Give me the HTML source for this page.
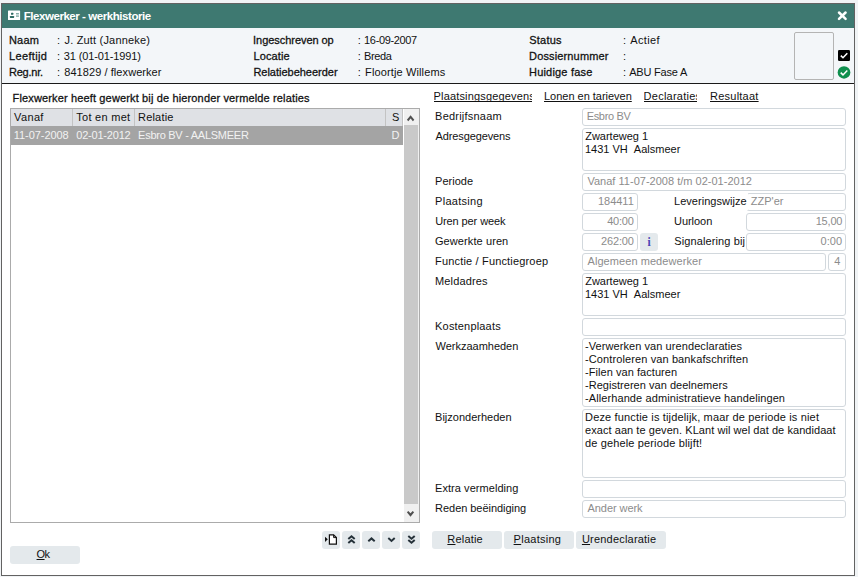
<!DOCTYPE html>
<html><head><meta charset="utf-8"><title>Flexwerker - werkhistorie</title>
<style>
html,body{margin:0;padding:0}
body{width:858px;height:577px;background:#f0f3f5;position:relative;overflow:hidden;font-family:"Liberation Sans",sans-serif;font-size:11px;color:#111}
.a{position:absolute}
.win{left:1px;top:3px;width:852px;height:571px;border:1px solid #626262;background:#fff}
.tb{left:2px;top:4px;width:852px;height:24px;background:#3e7971}
.hd{left:2px;top:28px;width:852px;height:55px;background:#f3f6f9}
.hl{left:2px;top:83px;width:852px;height:1px;background:#1a1a1a}
.tx{position:absolute;white-space:nowrap;line-height:14px;height:14px;overflow:visible}
.m{-webkit-text-stroke:0.28px #111}
.ttl{color:#fff;font-weight:bold;font-size:11.5px}
.sel{color:#f2f2f2}
.dis{color:#8c8c8c}
.tab{text-decoration:underline;text-underline-offset:1px;text-decoration-skip-ink:none;text-decoration-thickness:1px;overflow:hidden;height:13px}
.inp{position:absolute;box-sizing:border-box;border:1px solid #d2d8dd;border-radius:3px;background:#fff}
.btn{position:absolute;background:#e4e9ec;border-radius:3px;height:18px}
u{text-decoration:underline;text-underline-offset:1px;text-decoration-skip-ink:none;text-decoration-thickness:1px}
</style></head>
<body>
<div class="a win"></div><div class="a tb"></div><div class="a hd"></div><div class="a hl"></div>
<svg class="a" style="left:8px;top:10px" width="13" height="11" viewBox="0 0 13 11"><rect x="0" y="0.5" width="12.1" height="9.5" rx="0.6" fill="#fff"/><rect x="3" y="2.7" width="2.300" height="2" rx="0.5" fill="#2f6b62"/><rect x="1.900" y="6" width="4.200" height="1.900" rx="0.4" fill="#2f6b62"/><rect x="8" y="3.100" width="2.900" height="3.600" fill="#cfdedb"/><rect x="8" y="3.100" width="2.900" height="1" fill="#7fa8a2"/><rect x="8" y="5.700" width="2.900" height="1" fill="#7fa8a2"/></svg>
<svg class="a" style="left:836px;top:10px" width="12" height="12" viewBox="0 0 12 12"><path d="M3 2.500L9.600 8.900M9.600 2.500L3 8.900" stroke="#fff" stroke-width="2.500" stroke-linecap="round"/></svg>
<div class="a" style="left:794px;top:32px;width:38px;height:46px;border:1px solid #b4b4b4;border-radius:2px;background:#f3f6f9"></div>
<svg class="a" style="left:838px;top:50px" width="12" height="11" viewBox="0 0 12 11"><rect width="12" height="11" rx="1.2" fill="#000"/><path d="M2.800 5.600L5 7.800L9.300 3.300" stroke="#fff" stroke-width="1.500" fill="none"/></svg>
<svg class="a" style="left:837px;top:66px" width="14" height="13" viewBox="0 0 14 13"><ellipse cx="7" cy="6.450" rx="6.350" ry="6.250" fill="#0e8f4e"/><path d="M3.700 6.600L6 8.900L10.300 4.500" stroke="#fff" stroke-width="1.500" fill="none"/></svg>
<div class="a" style="left:10px;top:108px;width:408px;height:413px;border:1px solid #ababab;background:#fff"></div>
<div class="a" style="left:11px;top:109px;width:392px;height:17px;background:#dfe1e5"></div>
<div class="a" style="left:72px;top:109px;width:1px;height:17px;background:#c3c3c3"></div>
<div class="a" style="left:134px;top:109px;width:1px;height:17px;background:#c3c3c3"></div>
<div class="a" style="left:385px;top:109px;width:1px;height:17px;background:#c3c3c3"></div>
<div class="a" style="left:402px;top:109px;width:1px;height:17px;background:#c3c3c3"></div>
<div class="a" style="left:11px;top:126px;width:392px;height:19px;background:#a4a4a4"></div>
<div class="a" style="left:404px;top:109px;width:15px;height:413px;background:#f0f0f0"></div>
<div class="a" style="left:404px;top:125px;width:14px;height:379px;background:#c9c9c9"></div>
<svg class="a" style="left:403px;top:109px" width="16" height="16" viewBox="0 0 16 16"><path d="M3.900 10.800L5.300 12.200L7.600 9.600L9.900 12.200L11.300 10.800L7.600 6.200Z" fill="#505050"/></svg>
<svg class="a" style="left:403px;top:505px" width="16" height="16" viewBox="0 0 16 16"><path d="M3.900 7.300L5.300 5.900L7.500 8.300L9.700 5.900L11.100 7.300L7.500 11.700Z" fill="#505050"/></svg>
<div class="inp" style="left:582px;top:108px;width:264px;height:18px"></div>
<div class="inp" style="left:582px;top:128px;width:264px;height:43px"></div>
<div class="inp" style="left:582px;top:173px;width:264px;height:18px"></div>
<div class="inp" style="left:582px;top:193px;width:56px;height:18px"></div>
<div class="inp" style="left:746px;top:193px;width:100px;height:18px"></div>
<div class="inp" style="left:582px;top:213px;width:56px;height:18px"></div>
<div class="inp" style="left:746px;top:213px;width:100px;height:18px"></div>
<div class="inp" style="left:582px;top:233px;width:56px;height:18px"></div>
<div class="inp" style="left:746px;top:233px;width:100px;height:18px"></div>
<div class="inp" style="left:582px;top:253px;width:244px;height:18px"></div>
<div class="inp" style="left:828px;top:253px;width:18px;height:18px"></div>
<div class="inp" style="left:582px;top:273px;width:264px;height:43px"></div>
<div class="inp" style="left:582px;top:318px;width:264px;height:18px"></div>
<div class="inp" style="left:582px;top:338px;width:264px;height:69px"></div>
<div class="inp" style="left:582px;top:409px;width:264px;height:69px"></div>
<div class="inp" style="left:582px;top:480px;width:264px;height:18px"></div>
<div class="inp" style="left:582px;top:500px;width:264px;height:18px"></div>
<div class="a" style="left:745px;top:193px;width:2.5px;height:17px;background:#fff"></div>
<div class="btn" style="left:640px;top:233px;width:18px;height:18px"><span style="position:absolute;left:0;right:0;text-align:center;line-height:14px;font-family:'Liberation Serif',serif;font-weight:bold;color:#4a42b4;font-size:11.5px;top:2px">i</span></div>
<div class="btn" style="left:10px;top:546px;width:70px"></div>
<div class="btn" style="left:432px;top:531px;width:70px"></div>
<div class="btn" style="left:504px;top:531px;width:70px"></div>
<div class="btn" style="left:576px;top:531px;width:90px"></div>
<div class="btn" style="left:322px;top:531px;width:18px"><svg width="18" height="18" viewBox="0 0 18 18" style="position:absolute;left:0;top:0"><path d="M3 5.700L5.800 8.300L3 10.900Z" fill="#111"/><path d="M7.400 3.800H11.600L14.400 6.600V13.200H7.400Z" fill="#fff" stroke="#111" stroke-width="1.200"/><path d="M11.600 3.800V6.600H14.400" fill="none" stroke="#111" stroke-width="1"/></svg></div>
<div class="btn" style="left:342px;top:531px;width:18px"><svg width="18" height="18" viewBox="0 0 18 18" style="position:absolute;left:0;top:0"><path d="M6.300 8.100L9.500 5.300L12.700 8.100M6.300 12.100L9.500 9.300L12.700 12.100" stroke="#26323a" stroke-width="2" fill="none"/></svg></div>
<div class="btn" style="left:362px;top:531px;width:18px"><svg width="18" height="18" viewBox="0 0 18 18" style="position:absolute;left:0;top:0"><path d="M6.300 10.200L9.500 7.400L12.700 10.200" stroke="#26323a" stroke-width="2" fill="none"/></svg></div>
<div class="btn" style="left:382px;top:531px;width:18px"><svg width="18" height="18" viewBox="0 0 18 18" style="position:absolute;left:0;top:0"><path d="M6.300 7.100L9.500 9.900L12.700 7.100" stroke="#26323a" stroke-width="2" fill="none"/></svg></div>
<div class="btn" style="left:402px;top:531px;width:18px"><svg width="18" height="18" viewBox="0 0 18 18" style="position:absolute;left:0;top:0"><path d="M6.300 4.900L9.500 7.700L12.700 4.900M6.300 8.900L9.500 11.700L12.700 8.900" stroke="#26323a" stroke-width="2" fill="none"/></svg></div>
<span class="tx ttl" style="left:23.68px;top:9.00px;letter-spacing:-0.441px;">Flexwerker - werkhistorie</span>
<span class="tx m" style="left:8.96px;top:33.00px;letter-spacing:0.220px;">Naam</span>
<span class="tx " style="left:57.00px;top:33.00px;letter-spacing:0.185px;"><span style="margin-right:1px">:</span> J. Zutt (Janneke)</span>
<span class="tx m" style="left:8.95px;top:49.00px;letter-spacing:0.369px;">Leeftijd</span>
<span class="tx " style="left:57.00px;top:49.00px;letter-spacing:-0.137px;"><span style="margin-right:1px">:</span> 31 (01-01-1991)</span>
<span class="tx m" style="left:8.95px;top:65.00px;letter-spacing:-0.209px;">Reg.nr.</span>
<span class="tx " style="left:57.00px;top:65.00px;letter-spacing:0.068px;"><span style="margin-right:1px">:</span> 841829 / flexwerker</span>
<span class="tx m" style="left:253.10px;top:33.00px;letter-spacing:-0.050px;">Ingeschreven op</span>
<span class="tx " style="left:357.66px;top:33.00px;letter-spacing:-0.347px;"><span style="margin-right:1px">:</span> 16-09-2007</span>
<span class="tx m" style="left:253.39px;top:49.00px;letter-spacing:0.147px;">Locatie</span>
<span class="tx " style="left:357.66px;top:49.00px;letter-spacing:-0.367px;"><span style="margin-right:1px">:</span> Breda</span>
<span class="tx m" style="left:253.39px;top:65.00px;letter-spacing:-0.011px;">Relatiebeheerder</span>
<span class="tx " style="left:357.66px;top:65.00px;letter-spacing:0.130px;"><span style="margin-right:1px">:</span> Floortje Willems</span>
<span class="tx m" style="left:529.21px;top:33.00px;letter-spacing:0.242px;">Status</span>
<span class="tx " style="left:623.00px;top:33.00px;letter-spacing:0.380px;"><span style="margin-right:1px">:</span> Actief</span>
<span class="tx m" style="left:529.05px;top:49.00px;letter-spacing:0.146px;">Dossiernummer</span>
<span class="tx " style="left:623.00px;top:49.00px;">:</span>
<span class="tx m" style="left:529.03px;top:65.00px;letter-spacing:0.190px;">Huidige fase</span>
<span class="tx " style="left:623.00px;top:65.00px;letter-spacing:-0.186px;"><span style="margin-right:1px">:</span> ABU Fase A</span>
<span class="tx m" style="left:12.56px;top:91.00px;letter-spacing:0.144px;">Flexwerker heeft gewerkt bij de hieronder vermelde relaties</span>
<span class="tx " style="left:14.05px;top:110.00px;letter-spacing:0.362px;">Vanaf</span>
<span class="tx " style="left:76.24px;top:110.00px;letter-spacing:0.280px;">Tot en met</span>
<span class="tx " style="left:138.08px;top:110.00px;letter-spacing:0.179px;">Relatie</span>
<span class="tx " style="left:392.09px;top:110.00px;">S</span>
<span class="tx sel" style="left:13.84px;top:128.00px;letter-spacing:-0.062px;">11-07-2008</span>
<span class="tx sel" style="left:76.29px;top:128.00px;letter-spacing:-0.211px;">02-01-2012</span>
<span class="tx sel" style="left:138.08px;top:128.00px;letter-spacing:-0.266px;">Esbro BV - AALSMEER</span>
<span class="tx sel" style="left:391.59px;top:128.00px;">D</span>
<span class="tx " style="left:435.08px;top:109.00px;letter-spacing:0.214px;">Bedrijfsnaam</span>
<span class="tx " style="left:435.56px;top:129.00px;letter-spacing:-0.125px;">Adresgegevens</span>
<span class="tx " style="left:435.08px;top:174.00px;">Periode</span>
<span class="tx " style="left:435.08px;top:194.00px;letter-spacing:0.273px;">Plaatsing</span>
<span class="tx " style="left:435.13px;top:214.00px;letter-spacing:-0.094px;">Uren per week</span>
<span class="tx " style="left:434.98px;top:234.00px;letter-spacing:0.092px;">Gewerkte uren</span>
<span class="tx " style="left:435.08px;top:254.00px;letter-spacing:0.167px;">Functie / Functiegroep</span>
<span class="tx " style="left:435.08px;top:274.00px;letter-spacing:0.122px;">Meldadres</span>
<span class="tx " style="left:435.08px;top:319.00px;letter-spacing:0.179px;">Kostenplaats</span>
<span class="tx " style="left:435.60px;top:339.00px;letter-spacing:-0.021px;">Werkzaamheden</span>
<span class="tx " style="left:435.08px;top:410.00px;">Bijzonderheden</span>
<span class="tx " style="left:435.08px;top:481.00px;letter-spacing:0.049px;">Extra vermelding</span>
<span class="tx " style="left:435.08px;top:501.00px;letter-spacing:-0.042px;">Reden beëindiging</span>
<span class="tx " style="left:674.01px;top:194.00px;letter-spacing:0.034px;">Leveringswijze</span>
<span class="tx " style="left:674.00px;top:214.00px;letter-spacing:-0.044px;">Uurloon</span>
<span class="tx " style="left:674.28px;top:234.00px;letter-spacing:0.112px;">Signalering bij</span>
<span class="tx dis" style="left:586.68px;top:109.00px;letter-spacing:-0.328px;">Esbro BV</span>
<span class="tx " style="left:585.20px;top:129.00px;letter-spacing:-0.005px;">Zwarteweg 1</span>
<span class="tx " style="left:584.88px;top:142.00px;letter-spacing:0.008px;">1431 VH  Aalsmeer</span>
<span class="tx dis" style="left:587.46px;top:174.00px;letter-spacing:0.012px;">Vanaf 11-07-2008 t/m 02-01-2012</span>
<span class="tx dis" style="left:597.92px;top:194.00px;letter-spacing:-0.006px;">184411</span>
<span class="tx dis" style="left:607.16px;top:214.00px;letter-spacing:-0.204px;">40:00</span>
<span class="tx dis" style="left:601.04px;top:234.00px;letter-spacing:-0.167px;">262:00</span>
<span class="tx dis" style="left:750.75px;top:194.00px;letter-spacing:0.016px;">ZZP'er</span>
<span class="tx dis" style="left:815.71px;top:214.00px;letter-spacing:-0.204px;">15,00</span>
<span class="tx dis" style="left:820.50px;top:234.00px;letter-spacing:0.090px;">0:00</span>
<span class="tx dis" style="left:587.53px;top:254.00px;letter-spacing:0.066px;">Algemeen medewerker</span>
<span class="tx dis" style="left:834.16px;top:254.00px;">4</span>
<span class="tx " style="left:585.20px;top:274.00px;letter-spacing:-0.005px;">Zwarteweg 1</span>
<span class="tx " style="left:584.88px;top:287.00px;letter-spacing:0.008px;">1431 VH  Aalsmeer</span>
<span class="tx " style="left:584.97px;top:339.00px;letter-spacing:0.078px;">-Verwerken van urendeclaraties</span>
<span class="tx " style="left:584.97px;top:352.00px;letter-spacing:0.113px;">-Controleren van bankafschriften</span>
<span class="tx " style="left:584.97px;top:365.00px;letter-spacing:0.059px;">-Filen van facturen</span>
<span class="tx " style="left:584.97px;top:378.00px;letter-spacing:0.032px;">-Registreren van deelnemers</span>
<span class="tx " style="left:584.97px;top:391.00px;letter-spacing:0.098px;">-Allerhande administratieve handelingen</span>
<span class="tx " style="left:585.08px;top:410.00px;letter-spacing:0.156px;">Deze functie is tijdelijk, maar de periode is niet</span>
<span class="tx " style="left:585.03px;top:423.00px;letter-spacing:0.059px;">exact aan te geven. KLant wil wel dat de kandidaat</span>
<span class="tx " style="left:584.95px;top:436.00px;letter-spacing:0.145px;">de gehele periode blijft!</span>
<span class="tx dis" style="left:587.53px;top:501.00px;letter-spacing:-0.069px;">Ander werk</span>
<span class="tx tab" style="left:433.60px;top:89.00px;letter-spacing:0.156px;width:98.4px;">Plaatsingsgegevens</span>
<span class="tx tab" style="left:544.01px;top:89.00px;letter-spacing:-0.017px;">Lonen en tarieven</span>
<span class="tx tab" style="left:643.59px;top:89.00px;letter-spacing:0.247px;width:53.4px;">Declaraties</span>
<span class="tx tab" style="left:710.02px;top:89.00px;letter-spacing:0.235px;">Resultaat</span>
<span class="tx " style="left:36.55px;top:547.00px;letter-spacing:-0.542px;"><u>O</u>k</span>
<span class="tx " style="left:447.36px;top:532.00px;letter-spacing:0.186px;"><u>R</u>elatie</span>
<span class="tx " style="left:513.60px;top:532.00px;letter-spacing:0.267px;"><u>P</u>laatsing</span>
<span class="tx " style="left:581.92px;top:532.00px;letter-spacing:0.204px;"><u>U</u>rendeclaratie</span>
</body></html>
